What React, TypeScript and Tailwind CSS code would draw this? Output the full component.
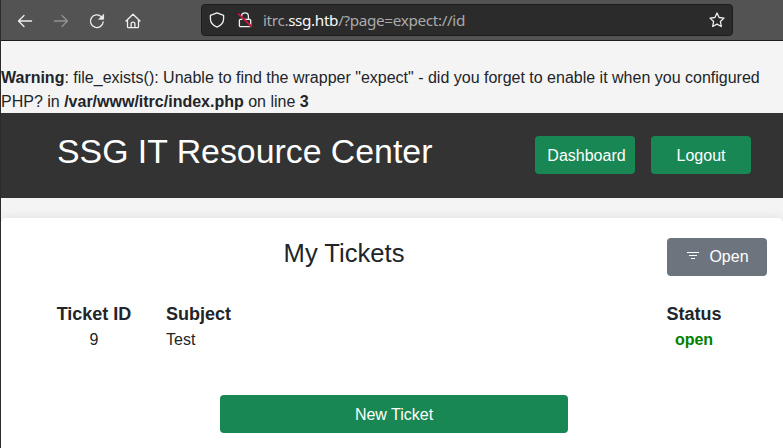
import type { ReactNode } from "react";

function NavIcon({ children, className = "" }: { children: ReactNode; className?: string }) {
  return (
    <svg
      width="16"
      height="16"
      viewBox="0 0 16 16"
      fill="none"
      stroke="currentColor"
      strokeWidth="1.3"
      strokeLinecap="round"
      strokeLinejoin="round"
      className={`shrink-0 ${className}`}
    >
      {children}
    </svg>
  );
}

function Toolbar() {
  return (
    <div className="flex h-[41px] items-start border-b border-[#1c1c1c] bg-[#535353] text-[#f0f0f0]">
      <div className="flex h-[41px] w-[200px] shrink-0 items-center gap-5 pl-4">
        <NavIcon>
          <path d="M14.6 8H1.7M7 2.5 1.5 8 7 13.5" />
        </NavIcon>
        <NavIcon className="text-[#929292]">
          <path d="M1.4 8h12.9M9 2.5 14.5 8 9 13.5" />
        </NavIcon>
        <NavIcon>
          <path d="M14.2 9A6.4 6.4 0 1 1 12.3 3.6" />
          <path d="M14.6 1.7v4.5H10z" fill="currentColor" strokeWidth="0.8" />
        </NavIcon>
        <NavIcon>
          <path d="M1 8 8 1.2 15 8M2.5 6.8v6.9c0 .6.4 1 1 1h9c.6 0 1-.4 1-1V6.8M6.1 14.5v-3.6c0-2.5 3.8-2.5 3.8 0v3.6" />
        </NavIcon>
      </div>
      <div className="mt-1 flex h-8 w-[532px] shrink-0 items-center rounded border border-[#1d1d1d] bg-[#2b2b2b] px-[7px]">
        <NavIcon>
          <path d="M8 .9 14.6 3.4v3.4c0 4.1-3.3 7-6.6 8.3C4.7 13.8 1.4 10.9 1.4 6.8V3.4z" />
        </NavIcon>
        <NavIcon className="ml-3">
          <path d="M4.6 7V4.2a3.4 3.4 0 0 1 6.8 0V7M3.5 7.3h9.1c.7 0 1.1.4 1.1 1.1v5c0 .8-.4 1.2-1.1 1.2H3.5c-.7 0-1.1-.4-1.1-1.2v-5c0-.7.4-1.1 1.1-1.1z" />
          <path d="M1.8 2.8 14.8 15" stroke="#2b2b2b" strokeWidth="2" />
          <path d="M1.6 2 14.6 14.6" stroke="#e8103c" strokeWidth="1.5" />
        </NavIcon>
        <div className="ml-[10px] grow whitespace-nowrap font-['Noto_Sans',sans-serif] text-[15.3px] leading-5 tracking-[-0.36px] text-[#aaaaaa]">
          itrc.<span className="text-[#f9f9fa]">ssg.htb</span>/?page=expect://id
        </div>
        <NavIcon>
          <path d="m8 1 2.1 4.5 4.9.6-3.6 3.4.9 5L8 12.1l-4.3 2.4.9-5L1 6.1l4.9-.6z" />
        </NavIcon>
      </div>
    </div>
  );
}

const button = "flex h-[38px] items-center justify-center rounded text-white";

export default function App() {
  return (
    <div className="flex h-[448px] w-[783px] flex-col overflow-hidden border-l border-[#2b2b2b] bg-[#f4f4f4] font-['Liberation_Sans',Arial,sans-serif] text-base leading-6 text-[#212529]">
      <Toolbar />
      <p className="h-[72px] shrink-0 whitespace-nowrap pt-[25px]">
        <b>Warning</b>: file_exists(): Unable to find the wrapper "expect" - did you forget to enable it when you configured
        <br />
        PHP? in <b>/var/www/itrc/index.php</b> on line <b>3</b>
      </p>
      <header className="z-10 flex h-[85px] shrink-0 items-start justify-between bg-[#333333] pl-14 pr-8 text-white">
        <h1 className="mt-[18px] text-[33.85px] leading-[41px]">SSG IT Resource Center</h1>
        <nav className="mt-[23px] flex gap-4">
          <button className={`${button} w-[100px] bg-[#198754] pl-[3px] pt-[2px]`}>Dashboard</button>
          <button className={`${button} w-[100px] bg-[#198754] pt-[2px]`}>Logout</button>
        </nav>
      </header>
      <main className="mt-5 h-[260px] shrink-0 rounded-[5px] bg-white px-4 pt-5 shadow-[0_0_10px_rgba(0,0,0,0.1)]">
        <div className="flex items-start">
          <h2 className="w-[650px] pl-1 text-center text-[25.6px] leading-[30px]">My Tickets</h2>
          <button className={`${button} w-[100px] gap-[10px] bg-[#6c757d] pl-[2px]`}>
            <svg width="12" height="8" viewBox="0 0 12 8" stroke="currentColor" strokeWidth="1" className="-mt-[2px]">
              <path d="M0 .5h12M2 3.5h8M4 6.5h4" />
            </svg>
            Open
          </button>
        </div>
        <table className="mt-[25px] w-[732px] table-fixed border-collapse">
          <thead>
            <tr className="text-lg leading-[27px]">
              <th className="w-[149px] p-0">
                <div className="w-[154px]">Ticket ID</div>
              </th>
              <th className="p-0 text-left">Subject</th>
              <th className="w-[110px] p-0">Status</th>
            </tr>
          </thead>
          <tbody>
            <tr>
              <td className="p-0 text-center">
                <div className="w-[154px]">9</div>
              </td>
              <td className="p-0">Test</td>
              <td className="p-0 text-center font-bold text-[green]">open</td>
            </tr>
          </tbody>
        </table>
        <button className={`${button} ml-[203px] mt-[43px] w-[348px] bg-[#198754] pt-[2px]`}>New Ticket</button>
      </main>
    </div>
  );
}
